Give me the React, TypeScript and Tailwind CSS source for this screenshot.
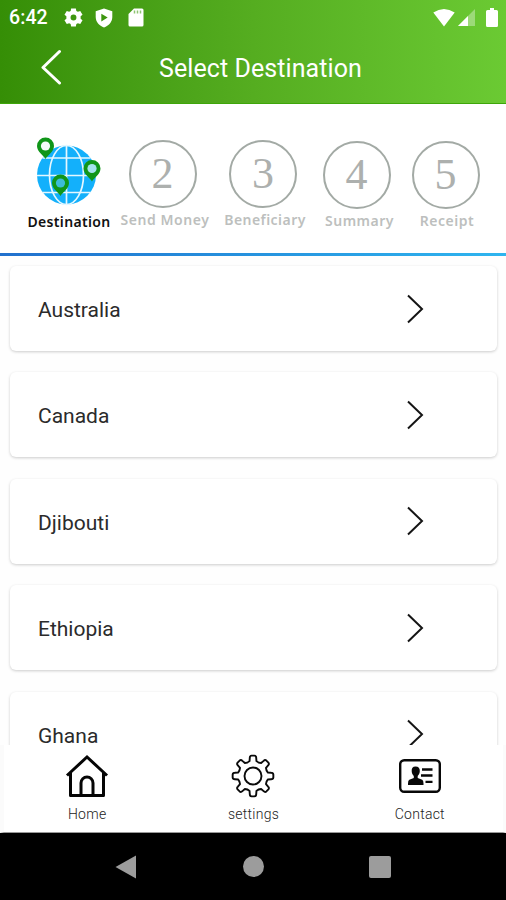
import type { ReactNode } from "react";

const COUNTRIES = ["Australia", "Canada", "Djibouti", "Ethiopia", "Ghana"];

const STEPS = [
  { number: 2, label: "Send Money", column: "w-[98px]", circle: "mr-[5px]", text: "tracking-[0.55px]" },
  { number: 3, label: "Beneficiary", column: "w-[102px]", circle: "mr-1", text: "tracking-[0.45px]" },
  { number: 4, label: "Summary", column: "w-[87px] pt-px", circle: "mr-1.5", text: "tracking-[0.5px]" },
  { number: 5, label: "Receipt", column: "w-[88px] pt-px", circle: "mr-[3px]", text: "tracking-[0.5px]" },
];

function polar(radius: number, degrees: number) {
  const angle = (degrees * Math.PI) / 180;
  return `${(22 + radius * Math.cos(angle)).toFixed(2)} ${(22 + radius * Math.sin(angle)).toFixed(2)}`;
}

// Outline of an eight-toothed cog, centred in a 44x44 box
const COG_PATH =
  [0, 45, 90, 135, 180, 225, 270, 315]
    .map(
      (a, i) =>
        `${i === 0 ? "M" : "L"}${polar(15.3, a - 13)} L${polar(18.5, a - 10)} Q${polar(20.4, a - 9)} ${polar(20.4, a - 4)} L${polar(20.4, a + 4)} Q${polar(20.4, a + 9)} ${polar(18.5, a + 10)} L${polar(15.3, a + 13)} Q${polar(14.2, a + 22.5)} ${polar(15.3, a + 32)}`,
    )
    .join(" ") + " Z";

function StatusBar() {
  return (
    <div className="flex h-[35px] items-center pl-[9px] pr-2 text-white">
      <span className="w-[55px] pt-px text-[19.5px] font-medium leading-none tracking-[0.1px]">6:42</span>
      <svg className="h-[19px] w-[19px]" viewBox="0 0 20 20" fill="currentColor">
        <path
          fillRule="evenodd"
          d="M7.500.500h5l.5 2.600 1.600.9 2.500-.9 2.400 4-2 1.700v2.400l2 1.700-2.400 4-2.500-.9-1.600.9-.5 2.600h-5L7 16.900l-1.600-.9-2.500.9-2.400-4 2-1.700V8.800l-2-1.700 2.400-4 2.500.9L7 3.100zM10 6.900a3.100 3.100 0 1 0 0 6.200 3.100 3.100 0 0 0 0-6.200z"
        />
      </svg>
      <svg className="ml-3 h-5 w-[18px]" viewBox="0 0 18 20">
        <path d="M9 .5 17.300 3.300V9c0 5-3.600 8.600-8.300 10.500C4.300 17.600.700 14 .700 9V3.300z" fill="currentColor" />
        <path d="M6.300 5.800v7.600L12.700 9.600z" fill="#3d960f" />
      </svg>
      <svg className="ml-[15px] h-[19px] w-4" viewBox="0 0 16 19">
        <path d="M6 .500h8q1.500 0 1.500 1.500v15q0 1.500-1.500 1.500H2Q.500 18.500.500 17V6z" fill="currentColor" />
        <path d="M6.500 2.500v3M9.500 2.500v3M12.500 2.500v3" stroke="#8fc473" strokeWidth="1.500" />
      </svg>
      <svg className="ml-auto h-[18px] w-[22px]" viewBox="0 0 22 18" fill="currentColor">
        <path d="M.300 3.500Q11-3.500 21.700 3.500L11 17.500z" />
      </svg>
      <svg className="ml-[3px] h-[17px] w-[17px]" viewBox="0 0 17 17" fill="currentColor">
        <path d="M17 0v17H0z" opacity=".35" />
        <path d="M10 7v10H0z" />
      </svg>
      <svg className="ml-[11px] h-[19px] w-3" viewBox="0 0 12 19" fill="currentColor">
        <path d="M4 0h4v2h2.500Q12 2 12 3.500v14q0 1.500-1.500 1.500h-9Q0 19 0 17.500v-14Q0 2 1.500 2H4z" />
      </svg>
    </div>
  );
}

function Header() {
  return (
    <header className="h-[104px] shrink-0 border-b border-[#3ea60a] bg-linear-to-r from-[#358e06] via-[#55ad20] to-[#6bca33]">
      <StatusBar />
      <div className="grid h-[63px] grid-cols-[159px_1fr_144px] items-center text-white">
        <svg className="ml-10 h-9 w-[23px]" viewBox="0 0 23 36" fill="none">
          <path
            d="M19.500 2.500 3 18.500 19.500 34"
            stroke="currentColor"
            strokeWidth="3"
            strokeLinecap="round"
            strokeLinejoin="round"
          />
        </svg>
        <h1 className="whitespace-nowrap pt-1 text-[25px] leading-8 tracking-[0.08px]">Select Destination</h1>
      </div>
    </header>
  );
}

function Pin({ x, y, hole }: { x: number; y: number; hole: string }) {
  return (
    <g transform={`translate(${x} ${y})`}>
      <path d="M0 13C-2 9-8.500 6-8.500 0a8.500 8.500 0 0 1 17 0C8.500 6 2 9 0 13z" fill="#109619" />
      <circle r="4.600" fill={hole} />
    </g>
  );
}

function Globe() {
  return (
    <svg className="mr-[5px] h-[74px] w-[74px]" viewBox="0 0 74 74" fill="none">
      <circle cx="36.500" cy="41" r="29.500" fill="#13b0fb" />
      <g stroke="#e4f7ff" strokeWidth="1.700">
        <ellipse cx="36.500" cy="41" rx="17" ry="29.500" />
        <path d="M36.500 11.500v59M7 41.500h59M12.500 24h48M12.500 58.500h48" />
      </g>
      <Pin x={15.5} y={12} hole="#f4fbfa" />
      <Pin x={62} y={34.5} hole="#a5e3ee" />
      <Pin x={30.5} y={49} hole="#3cbcd8" />
    </svg>
  );
}

function Steps() {
  return (
    <div className="flex h-[149px] shrink-0 pl-[22px] pt-[30px] font-['Noto_Sans'] text-sm font-semibold leading-5">
      <div className="flex w-[94px] flex-col items-center">
        <Globe />
        <span className="mt-1 whitespace-nowrap tracking-[0.35px] text-[#111]">Destination</span>
      </div>
      {STEPS.map((step) => (
        <div key={step.number} className={`flex flex-col items-center ${step.column}`}>
          <div
            className={`mt-1.5 flex h-[68px] w-[68px] shrink-0 items-center justify-center rounded-full border-2 border-[#a3aaa5] ${step.circle}`}
          >
            <span className="font-['Liberation_Serif'] text-[44px] font-normal leading-none text-[#adb0ae]">
              {step.number}
            </span>
          </div>
          <span className={`mt-[2px] whitespace-nowrap text-[#bdbfbe] ${step.text}`}>{step.label}</span>
        </div>
      ))}
    </div>
  );
}

function CountryCard({ name }: { name: string }) {
  return (
    <button className="flex h-[85px] shrink-0 items-center justify-between rounded-md bg-white pl-[28px] pr-[73px] shadow-[0_1px_3px_rgba(0,0,0,0.2)]">
      <span className="pt-[3px] text-[21px] leading-[18px] text-[#2b2b2b]">{name}</span>
      <svg className="h-[30px] w-[18px]" viewBox="0 0 18 30" fill="none">
        <path d="M2 1.500 16 15 2 28.500" stroke="#151515" strokeWidth="2" />
      </svg>
    </button>
  );
}

function HomeIcon() {
  return (
    <svg className="h-11 w-11" viewBox="0 0 44 44" fill="none" stroke="#050505" strokeWidth="3">
      <path d="M2 21.500 22 3l20 18.500" />
      <path d="M5.500 19v22.500h33V19M16 41V29a6 6 0 0 1 12 0v12" strokeLinejoin="round" />
    </svg>
  );
}

function CogIcon() {
  return (
    <svg className="h-11 w-11" viewBox="0 0 44 44" fill="none" stroke="#0a0a0a" strokeWidth="1.900">
      <path d={COG_PATH} strokeLinejoin="round" />
      <circle cx="22" cy="22" r="8.500" />
    </svg>
  );
}

function ContactIcon() {
  return (
    <svg className="h-11 w-11" viewBox="0 0 44 44" fill="none">
      <rect x="2.200" y="6.200" width="39.600" height="31.600" rx="4" stroke="#080808" strokeWidth="2.400" />
      <path
        d="M17.500 12.500c3 0 4.500 2 4.300 4.700-.1 2.300-1 3.600-2.100 4.800v2.100l4.500 1.700q1.300.7 1.300 3.700v1.500h-15.500v-1.500q0-3 1.300-3.700l4.500-1.700V22c-1.100-1.200-2-2.500-2.100-4.800-.2-2.700 1-4.700 3.800-4.700z"
        fill="#080808"
      />
      <path d="M24 15.500h10.500M23 21.500h11.500M27.500 27.800h7" stroke="#080808" strokeWidth="2.300" />
    </svg>
  );
}

function Tab({ label, children }: { label: string; children: ReactNode }) {
  return (
    <div className="flex flex-1 flex-col items-center pt-[9px]">
      {children}
      <span className="mt-[7px] text-sm font-light leading-[18px] tracking-[0.25px] text-[#222]">{label}</span>
    </div>
  );
}

function BottomTabs() {
  return (
    <nav className="flex h-[88px] shrink-0 border-b border-l-4 border-r-[3px] border-x-[#fbfbfb] border-b-[#999] bg-white">
      <Tab label="Home">
        <HomeIcon />
      </Tab>
      <Tab label="settings">
        <CogIcon />
      </Tab>
      <Tab label="Contact">
        <ContactIcon />
      </Tab>
    </nav>
  );
}

function SystemBar() {
  return (
    <div className="flex h-[67px] shrink-0 items-center justify-between bg-black px-[115px]">
      <svg className="h-6 w-[22px]" viewBox="0 0 22 24">
        <path d="M21 .500v23L.500 12z" fill="#9c9c9c" />
      </svg>
      <div className="h-[21px] w-[21px] rounded-full bg-[#9c9c9c]" />
      <div className="h-[22px] w-[22px] rounded-xs bg-[#9c9c9c]" />
    </div>
  );
}

export default function App() {
  return (
    <div className="flex h-[900px] w-[506px] flex-col overflow-hidden bg-white font-[Roboto,sans-serif]">
      <Header />
      <Steps />
      <div className="h-[3px] shrink-0 bg-linear-to-r from-[#2170cd] to-[#2fb5ef]" />
      <main className="flex min-h-0 flex-1 flex-col gap-[21.4px] overflow-hidden bg-[#fefefe] pl-2.5 pr-[9px] pt-2.5">
        {COUNTRIES.map((name) => (
          <CountryCard key={name} name={name} />
        ))}
      </main>
      <BottomTabs />
      <SystemBar />
    </div>
  );
}
